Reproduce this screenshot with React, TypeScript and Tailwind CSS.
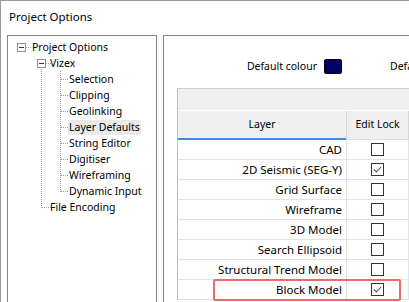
import React from 'react';

const FONT = { fontFamily: '"Noto Sans", "Open Sans", Arial, sans-serif' };

const treeItems = [
  { label: 'Project Options', x: 25 },
  { label: 'Vizex', x: 43 },
  { label: 'Selection', x: 62 },
  { label: 'Clipping', x: 62 },
  { label: 'Geolinking', x: 62 },
  { label: 'Layer Defaults', x: 62, selected: true },
  { label: 'String Editor', x: 62 },
  { label: 'Digitiser', x: 62 },
  { label: 'Wireframing', x: 62 },
  { label: 'Dynamic Input', x: 62 },
  { label: 'File Encoding', x: 43 },
];

const layers = [
  { name: 'CAD', locked: false },
  { name: '2D Seismic (SEG-Y)', locked: true },
  { name: 'Grid Surface', locked: false },
  { name: 'Wireframe', locked: false },
  { name: '3D Model', locked: false },
  { name: 'Search Ellipsoid', locked: false },
  { name: 'Structural Trend Model', locked: false },
  { name: 'Block Model', locked: true, highlight: true },
];

function TreeLines() {
  const childYs = [43, 59, 75, 91, 107, 123, 139, 155];
  return (
    <svg className="pointer-events-none absolute left-0 top-0" width="148" height="200">
      {/* root expander */}
      <rect x="9.5" y="7.5" width="8" height="8" fill="#fff" stroke="#919191" />
      <line x1="11" y1="11.5" x2="16" y2="11.5" stroke="#333" />
      <line x1="18" y1="11.5" x2="23" y2="11.5" stroke="#a0a0a0" strokeDasharray="1 1" />
      {/* vizex expander */}
      <rect x="29.5" y="23.5" width="8" height="8" fill="#fff" stroke="#919191" />
      <line x1="31" y1="27.5" x2="36" y2="27.5" stroke="#333" />
      <line x1="38" y1="27.5" x2="43" y2="27.5" stroke="#a0a0a0" strokeDasharray="1 1" />
      <line x1="33.5" y1="33" x2="33.5" y2="172" stroke="#a0a0a0" strokeDasharray="1 1" />
      <line x1="34" y1="171.5" x2="43" y2="171.5" stroke="#a0a0a0" strokeDasharray="1 1" />
      <line x1="52.5" y1="35" x2="52.5" y2="156" stroke="#a0a0a0" strokeDasharray="1 1" />
      {childYs.map((y) => (
        <line key={y} x1="53" y1={y + 0.5} x2="61" y2={y + 0.5} stroke="#a0a0a0" strokeDasharray="1 1" />
      ))}
    </svg>
  );
}

function CheckBox({ checked }: { checked: boolean }) {
  return (
    <div className="flex h-[13px] w-[13px] items-center justify-center border border-[#333] bg-white">
      {checked && (
        <svg width="11" height="11" viewBox="0 0 11 11">
          <path d="M2 5.5 L4.5 8 L9 3" fill="none" stroke="#555" strokeWidth="1.1" />
        </svg>
      )}
    </div>
  );
}

export default function App() {
  return (
    <div
      className="h-[302px] w-[409px] overflow-hidden border-l border-t border-[#9a9a9a] bg-white text-[11.5px] text-black"
      style={FONT}
    >
      <div className="flex h-[34px] items-center pb-[3px] pl-[8px] text-[11.5px]">Project Options</div>

      <div className="flex gap-[6px] pl-[6px]">
        {/* tree */}
        <div className="relative h-[280px] w-[150px] shrink-0 border border-[#828790] bg-white pt-[3px] text-[10.5px]">
          <TreeLines />
          {treeItems.map((item) => (
            <div key={item.label} className="flex h-[16px] items-center">
              <span
                className={
                  'leading-[15px] ' + (item.selected ? 'bg-[#e9e9e9] px-[1px]' : 'px-[1px]')
                }
                style={{ marginLeft: item.x - 2 }}
              >
                {item.label}
              </span>
            </div>
          ))}
        </div>

        {/* right panel */}
        <div className="h-[280px] w-[300px] shrink-0 border border-[#828790] bg-white pt-[23px]">
          <div className="flex h-[15px] items-center text-[10.5px]">
            <div className="w-[153px] shrink-0 text-right">Default colour</div>
            <div className="ml-[7px] h-[15px] w-[18px] shrink-0 rounded-[2px] border border-black bg-[#000066]" />
            <div className="ml-[48px] whitespace-nowrap">Default</div>
          </div>

          <div className="ml-[13px] mt-[14px] w-[300px] border-l border-[#bdbdbd]">
            <div className="h-[22px] border-t border-[#cfcfcf] bg-[#f0f0f0]" />
            <div className="flex h-[30px] border-t border-white bg-[#f0f0f0] text-[10.5px]">
              <div className="flex w-[169px] shrink-0 flex-col border-r border-[#d5d5d5]">
                <div className="flex flex-1 items-center justify-center">Layer</div>
                <div className="h-[2px] bg-[#3d8ee0]" />
              </div>
              <div className="flex w-[62px] shrink-0 items-center justify-center border-r border-[#d5d5d5] border-b border-b-[#e0e0e0]">
                Edit Lock
              </div>
              <div className="flex-1 border-b border-[#e0e0e0]" />
            </div>
            {layers.map((l) => (
              <div key={l.name} className="relative flex h-[20px] border-b border-[#e3e3e3]">
                <div className="flex w-[169px] shrink-0 items-center justify-end border-r border-[#e3e3e3] pr-[4px]">
                  {l.name}
                </div>
                <div className="flex w-[62px] shrink-0 items-center justify-center border-r border-[#e3e3e3]">
                  <CheckBox checked={l.locked} />
                </div>
                <div className="flex-1" />
                {l.highlight && (
                  <div className="pointer-events-none absolute left-[35px] top-[-1px] h-[22px] w-[188px] rounded-[2px] border-2 border-[#ec6a6a]" />
                )}
              </div>
            ))}
          </div>
        </div>
      </div>
    </div>
  );
}
